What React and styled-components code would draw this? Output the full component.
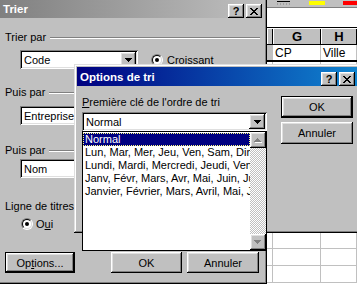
import React from "react";
import styled, { createGlobalStyle, css } from "styled-components";

const GlobalStyle = createGlobalStyle`
  html, body {
    margin: 0;
    padding: 0;
  }
  body {
    background: #c0c0c0;
    font-family: "Liberation Sans", Arial, sans-serif;
    font-size: 11px;
    color: #000;
  }
`;

const raised = css`
  box-shadow: inset -1px -1px #000, inset 1px 1px #fff, inset -2px -2px #808080,
    inset 2px 2px #dfdfdf;
`;

const sunken = css`
  box-shadow: inset 1px 1px #808080, inset -1px -1px #fff, inset 2px 2px #000,
    inset -2px -2px #dfdfdf;
`;

const Desktop = styled.div`
  position: relative;
  width: 357px;
  height: 284px;
  overflow: hidden;
  background: #c0c0c0;
`;

/* ---------- spreadsheet behind the dialogs ---------- */

const Sheet = styled.div`
  position: absolute;
  left: 267px;
  top: 0;
  right: 0;
  bottom: 0;
  display: flex;
  flex-direction: column;
  background: #fff;
`;

const SheetToolbar = styled.div`
  height: 8px;
  flex: none;
  display: flex;
  align-items: flex-start;
  padding-top: 1px;
  box-sizing: border-box;
  background: #c0c0c0;
  border-bottom: 1px solid #808080;
`;

const BorderIcon = styled.svg`
  margin-left: 10px;
  flex: none;
`;

const Swatch = styled.div`
  width: ${(p) => p.$w}px;
  height: 4px;
  margin-left: ${(p) => p.$ml}px;
  background: ${(p) => p.$color};
  flex: none;
`;

const FormulaArea = styled.div`
  height: 19px;
  flex: none;
  background: #fff;
  border-bottom: 1px solid #000;
`;

const SheetRow = styled.div`
  display: grid;
  grid-template-columns: 6px 48px 1fr;
  height: ${(p) => p.$h}px;
  flex: none;
  border-bottom: ${(p) => p.$line};
`;

const HeadCell = styled.div`
  display: flex;
  align-items: center;
  justify-content: center;
  background: #c0c0c0;
  font-weight: bold;
  font-size: 13px;
  box-shadow: inset 1px 1px #fff, inset -1px 0 #000;
`;

const Cell = styled.div`
  display: flex;
  align-items: center;
  padding-left: 2px;
  font-size: 12px;
  background: ${(p) => (p.$gray ? "#c0c0c0" : "#fff")};
  border-right: 1px solid #c0c0c0;
  overflow: hidden;
`;

/* ---------- windows ---------- */

const Window = styled.div`
  position: absolute;
  left: ${(p) => p.$x}px;
  top: ${(p) => p.$y}px;
  width: ${(p) => p.$w}px;
  height: ${(p) => p.$h}px;
  box-sizing: border-box;
  padding: 3px;
  display: flex;
  flex-direction: column;
  background: #c0c0c0;
  box-shadow: inset -1px -1px #000, inset 1px 1px #dfdfdf, inset -2px -2px #808080,
    inset 2px 2px #fff;
`;

const TitleBar = styled.div`
  height: 19px;
  flex: none;
  display: flex;
  align-items: center;
  padding: 0 2px 0 3px;
  background: ${(p) =>
    p.$active
      ? "linear-gradient(90deg, #000080, #1084d0)"
      : "linear-gradient(90deg, #808080, #c0c0c0)"};
  color: #fff;
  font-weight: bold;
  font-size: 11.5px;
`;

const TitleText = styled.span`
  flex: 1;
`;

const TitleButton = styled.div`
  width: 16px;
  height: 14px;
  align-self: flex-end;
  box-sizing: border-box;
  display: flex;
  align-items: center;
  justify-content: center;
  background: #c0c0c0;
  color: #000;
  font-size: 11px;
  font-weight: bold;
  ${raised}
  & + & {
    margin-left: 2px;
  }
`;

const CloseGlyph = () => (
  <svg width="8" height="7" viewBox="0 0 8 7" shapeRendering="crispEdges">
    <path
      fill="#000"
      d="M0 0h2v1H0zM6 0h2v1H6zM1 1h2v1H1zM5 1h2v1H5zM2 2h4v1H2zM3 3h2v1H3zM2 4h4v1H2zM1 5h2v1H1zM5 5h2v1H5zM0 6h2v1H0zM6 6h2v1H6z"
    />
  </svg>
);

const DownGlyph = ({ color = "#000" }) => (
  <svg width="7" height="4" viewBox="0 0 7 4" shapeRendering="crispEdges">
    <path fill={color} d="M0 0h7v1H0zM1 1h5v1H1zM2 2h3v1H2zM3 3h1v1H3z" />
  </svg>
);

const GrayArrow = ({ up }) => (
  <svg width="8" height="5" viewBox="0 0 8 5" shapeRendering="crispEdges">
    <g transform={up ? "" : "matrix(1 0 0 -1 0 4)"}>
      <path fill="#fff" d="M4 1h1v1H4zM3 2h3v1H3zM2 3h5v1H2zM1 4h7v1H1z" />
      <path fill="#808080" d="M3 0h1v1H3zM2 1h3v1H2zM1 2h5v1H1zM0 3h7v1H0z" />
    </g>
  </svg>
);

const TitleButtons = () => (
  <>
    <TitleButton>?</TitleButton>
    <TitleButton>
      <CloseGlyph />
    </TitleButton>
  </>
);

/* ---------- controls ---------- */

const Body = styled.div`
  flex: 1;
  display: flex;
  flex-direction: column;
  padding: 0 4px 0 5px;
`;

const GroupHeader = styled.div`
  display: flex;
  align-items: center;
  gap: 4px;
  height: 13px;
  line-height: 13px;
  margin-top: ${(p) => p.$mt}px;
  white-space: nowrap;
  &::after {
    content: "";
    flex: 1;
    border-top: 1px solid #808080;
    border-bottom: 1px solid #fff;
  }
`;

const Row = styled.div`
  display: flex;
  align-items: center;
  margin-top: ${(p) => p.$mt}px;
  padding-left: ${(p) => p.$pl || 0}px;
`;

const Combo = styled.div`
  width: ${(p) => p.$w}px;
  height: 19px;
  flex: none;
  box-sizing: border-box;
  padding: 2px;
  display: flex;
  align-items: center;
  background: #fff;
  position: relative;
  ${sunken}
`;

const ComboText = styled.span`
  flex: 1;
  padding-left: 2px;
  white-space: nowrap;
  overflow: hidden;
`;

const DropButton = styled.div`
  width: 16px;
  height: 15px;
  flex: none;
  box-sizing: border-box;
  display: flex;
  align-items: center;
  justify-content: center;
  background: #c0c0c0;
  ${raised}
`;

const RadioLabel = styled.label`
  display: flex;
  align-items: center;
  gap: ${(p) => p.$gap}px;
  margin-left: ${(p) => p.$ml}px;
  height: 13px;
`;

const RadioOuter = styled.span`
  width: 12px;
  height: 12px;
  box-sizing: border-box;
  border-radius: 50%;
  border: 1px solid;
  border-color: #808080 #fff #fff #808080;
  display: flex;
  flex: none;
`;

const RadioInner = styled.span`
  flex: 1;
  border-radius: 50%;
  border: 1px solid;
  border-color: #000 #dfdfdf #dfdfdf #000;
  background: #fff;
  display: flex;
  align-items: center;
  justify-content: center;
  &::after {
    content: "";
    width: 4px;
    height: 4px;
    border-radius: 50%;
    background: #000;
  }
`;

const Radio = () => (
  <RadioOuter>
    <RadioInner />
  </RadioOuter>
);

const Button = styled.div`
  width: ${(p) => p.$w}px;
  height: ${(p) => p.$h || 21}px;
  margin-left: ${(p) => p.$ml || 0}px;
  margin-top: ${(p) => p.$mt || 0}px;
  flex: none;
  box-sizing: border-box;
  display: flex;
  align-items: center;
  justify-content: center;
  background: #c0c0c0;
  ${raised}
  ${(p) =>
    p.$default &&
    css`
      border: 1px solid #000;
    `}
`;

/* ---------- options dialog ---------- */

const OptionsBody = styled.div`
  flex: 1;
  display: flex;
  padding: 10px 0 0 5px;
`;

const LeftColumn = styled.div`
  width: 185px;
  display: flex;
  flex-direction: column;
  position: relative;
`;

const FieldLabel = styled.div`
  height: 13px;
  line-height: 13px;
  margin-bottom: 3px;
`;

const RightColumn = styled.div`
  display: flex;
  flex-direction: column;
  margin-left: 14px;
`;

const DropList = styled.div`
  position: absolute;
  left: 0;
  top: 100%;
  width: 185px;
  height: 120px;
  box-sizing: border-box;
  border: 1px solid #000;
  background: #fff;
  display: flex;
  z-index: 2;
`;

const ListItems = styled.div`
  flex: 1;
  min-width: 0;
  padding-top: 1px;
  overflow: hidden;
`;

const ListItem = styled.div`
  height: 13px;
  line-height: 13px;
  padding-left: 2px;
  white-space: nowrap;
  overflow: hidden;
  ${(p) =>
    p.$selected &&
    css`
      background: #000080;
      color: #fff;
      outline: 1px dotted #ffff80;
      outline-offset: -1px;
    `}
`;

const ScrollBar = styled.div`
  width: 16px;
  flex: none;
  display: flex;
  flex-direction: column;
  justify-content: space-between;
  background: repeating-conic-gradient(#c0c0c0 0 25%, #fff 0 50%) 0 0 / 2px 2px;
`;

const ScrollButton = styled.div`
  width: 16px;
  height: 16px;
  box-sizing: border-box;
  display: flex;
  align-items: center;
  justify-content: center;
  background: #c0c0c0;
  ${raised}
`;

const sortOrders = [
  "Normal",
  "Lun, Mar, Mer, Jeu, Ven, Sam, Dim",
  "Lundi, Mardi, Mercredi, Jeudi, Vendredi, Samedi, Dimanche",
  "Janv, Févr, Mars, Avr, Mai, Juin, Juil, Août, Sept, Oct, Nov, Déc",
  "Janvier, Février, Mars, Avril, Mai, Juin, Juillet, Août, Septembre",
];

export default function App() {
  return (
    <>
      <GlobalStyle />
      <Desktop>
        <Sheet>
          <SheetToolbar>
            <BorderIcon width="14" height="4" viewBox="0 0 14 4">
              <rect x="0" y="0" width="13" height="1" fill="#000" />
              <path d="M0 3h1M3 3h1M6 3h1M9 3h1M12 3h1" stroke="#808080" strokeWidth="1" />
            </BorderIcon>
            <Swatch $w={16} $ml={18} $color="#ffff00" />
            <Swatch $w={15} $ml={18} $color="#ff0000" />
          </SheetToolbar>
          <FormulaArea />
          <SheetRow $h={16} $line="1px solid #000">
            <HeadCell />
            <HeadCell>G</HeadCell>
            <HeadCell>H</HeadCell>
          </SheetRow>
          <SheetRow $h={15} $line="2px solid #000">
            <Cell $gray />
            <Cell>CP</Cell>
            <Cell>Ville</Cell>
          </SheetRow>
          {Array.from({ length: 13 }).map((_, i) => (
            <SheetRow key={i} $h={16} $line="1px solid #c0c0c0">
              <Cell />
              <Cell />
              <Cell />
            </SheetRow>
          ))}
        </Sheet>

        <Window $x={-3} $y={-4} $w={270} $h={288}>
          <TitleBar>
            <TitleText>Trier</TitleText>
            <TitleButtons />
          </TitleBar>
          <Body>
            <GroupHeader $mt={13}>Trier par</GroupHeader>
            <Row $mt={6} $pl={15}>
              <Combo $w={118}>
                <ComboText>Code</ComboText>
                <DropButton>
                  <DownGlyph />
                </DropButton>
              </Combo>
              <RadioLabel $ml={13} $gap={4}>
                <Radio />
                <span>
                  <u>C</u>roissant
                </span>
              </RadioLabel>
            </Row>

            <GroupHeader $mt={17}>Puis par</GroupHeader>
            <Row $mt={7} $pl={15}>
              <Combo $w={118}>
                <ComboText>Entreprise</ComboText>
                <DropButton>
                  <DownGlyph />
                </DropButton>
              </Combo>
            </Row>

            <GroupHeader $mt={19}>Puis par</GroupHeader>
            <Row $mt={2} $pl={15}>
              <Combo $w={118}>
                <ComboText>Nom</ComboText>
                <DropButton>
                  <DownGlyph />
                </DropButton>
              </Combo>
            </Row>

            <GroupHeader $mt={22}>Ligne de titres</GroupHeader>
            <Row $mt={4} $pl={16}>
              <RadioLabel $ml={0} $gap={3}>
                <Radio />
                <span>
                  O<u>u</u>i
                </span>
              </RadioLabel>
            </Row>

            <Row $mt={22}>
              <Button $w={70} $default>
                <span>
                  Op<u>t</u>ions...
                </span>
              </Button>
              <Button $w={71} $ml={36}>
                OK
              </Button>
              <Button $w={72} $ml={5}>
                Annuler
              </Button>
            </Row>
          </Body>
        </Window>

        <Window $x={74} $y={64} $w={286} $h={169}>
          <TitleBar $active>
            <TitleText>Options de tri</TitleText>
            <TitleButtons />
          </TitleBar>
          <OptionsBody>
            <LeftColumn>
              <FieldLabel>
                <u>P</u>remière clé de l'ordre de tri
              </FieldLabel>
              <Combo $w={185}>
                <ComboText>Normal</ComboText>
                <DropButton>
                  <DownGlyph />
                </DropButton>
                <DropList>
                  <ListItems>
                    {sortOrders.map((item, i) => (
                      <ListItem key={item} $selected={i === 0}>
                        {item}
                      </ListItem>
                    ))}
                  </ListItems>
                  <ScrollBar>
                    <ScrollButton>
                      <GrayArrow up />
                    </ScrollButton>
                    <ScrollButton>
                      <GrayArrow />
                    </ScrollButton>
                  </ScrollBar>
                </DropList>
              </Combo>
            </LeftColumn>
            <RightColumn>
              <Button $w={72} $h={22} $default>
                OK
              </Button>
              <Button $w={72} $h={22} $mt={4}>
                Annuler
              </Button>
            </RightColumn>
          </OptionsBody>
        </Window>
      </Desktop>
    </>
  );
}
